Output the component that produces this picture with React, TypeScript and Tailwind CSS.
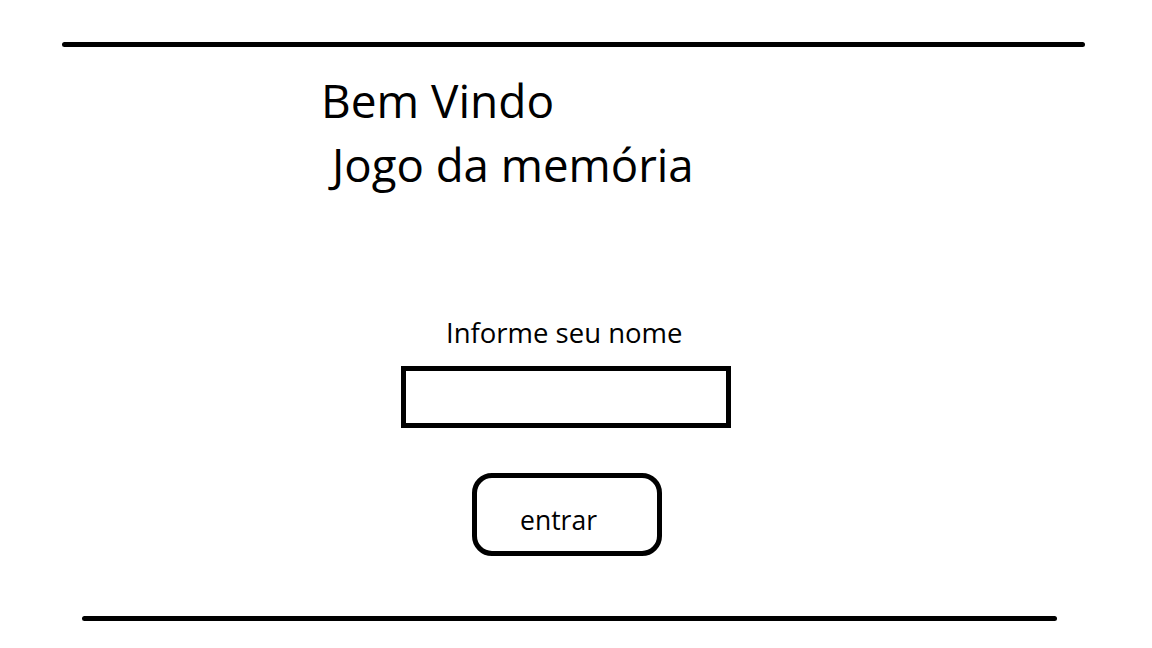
import React from "react";

export default function App() {
  return (
    <div
      className="w-[1152px] h-[648px] bg-white flex flex-col items-start text-black"
      style={{ fontFamily: '"Open Sans", "Noto Sans", sans-serif' }}
    >
      <div className="mt-[42px] ml-[62px] w-[1023px] h-[5px] rounded-full bg-black" />
      <h1 className="mt-[30px] ml-[321px] text-[46px] leading-[46px] font-normal">Bem Vindo</h1>
      <p className="mt-[18px] ml-[332px] text-[45.6px] leading-[46px]">Jogo da memória</p>
      <label htmlFor="nome" className="mt-[132px] ml-[446px] text-[27.5px] leading-[27px]">
        Informe seu nome
      </label>
      <input
        id="nome"
        type="text"
        className="mt-[20px] ml-[401px] w-[330px] h-[62px] border-[5px] border-black bg-white outline-none px-2 text-[24px]"
      />
      <button
        type="button"
        className="mt-[45px] ml-[472px] w-[190px] h-[83px] border-[5px] border-black rounded-[20px] bg-white flex items-start justify-start pt-[29px] pl-[43px] text-[26.5px] leading-[26px]"
      >
        entrar
      </button>
      <div className="mt-[60px] ml-[82px] w-[975px] h-[5px] rounded-full bg-black" />
    </div>
  );
}
